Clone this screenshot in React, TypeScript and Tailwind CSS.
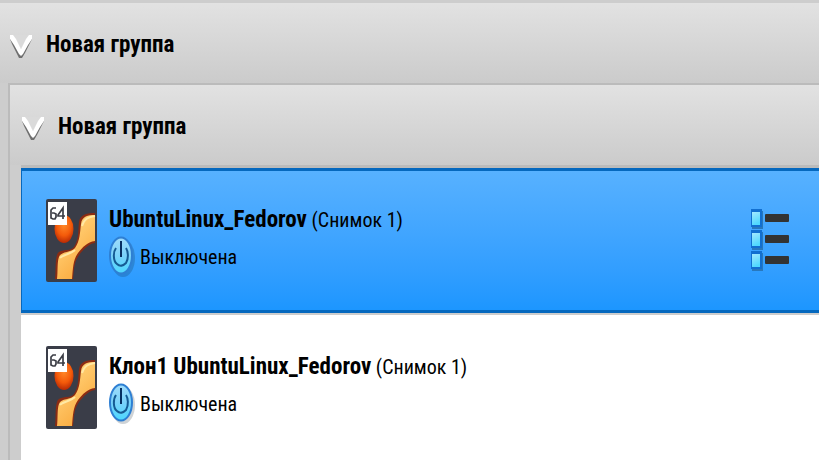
import React, { useId } from "react";

function Chevron() {
  return (
    <svg width="22" height="24" viewBox="0 0 22 24" aria-hidden="true" className="mt-2 shrink-0">
      <path d="M0 4 L2 9 L7 19 L9 23 H12 L15 18 L20 8 L22 4Z" fill="#6f6f6f" />
      <path d="M3 0 L11 15 L19 0Z" fill="#dadada" />
      <path d="M0 0 H3 L6 4 L11 14 L16 4 L19 0 H22 V4 L18 10 L13 19 L11 21 L9 19 L4 10 L0 4Z" fill="#fff" />
    </svg>
  );
}

function GroupHeader({ title, className }: { title: string; className: string }) {
  return (
    <button
      type="button"
      aria-expanded="true"
      className={`flex w-full items-center gap-[14px] bg-linear-to-b from-[#e2e2e2] to-[#cbcbcb] text-left text-[23px] leading-7 font-bold ${className}`}
    >
      <Chevron />
      <span className="pt-1">{title}</span>
    </button>
  );
}

function OsIcon() {
  const id = useId();
  return (
    <svg width="51" height="83" viewBox="0 0 51 83" role="img" aria-label="Ubuntu 64" className="shrink-0">
      <defs>
        <linearGradient id={`${id}a`} x1="0" y1="0" x2="0.6" y2="1">
          <stop offset="0" stopColor="#ffdc82" />
          <stop offset="0.5" stopColor="#ffc565" />
          <stop offset="1" stopColor="#f9a93d" />
        </linearGradient>
        <radialGradient id={`${id}b`} cx="0.5" cy="0.35" r="0.65">
          <stop offset="0" stopColor="#ff8a2a" />
          <stop offset="0.6" stopColor="#f45a0a" />
          <stop offset="1" stopColor="#b82a05" />
        </radialGradient>
      </defs>
      <rect width="51" height="83" rx="2" fill="#3a3d48" />
      <ellipse cx="18" cy="30" rx="9.500" ry="14" fill={`url(#${id}b)`} />
      <path
        d="M49 14 C42 14 34 15 33 23 C32 32 33 40 28 48 C24 53 13 49 11 56 C9 62 10 73 9 80 H27 C28 70 28 63 33 56 C38 50 42 45 49 44Z"
        fill="#8c2c12"
      />
      <path
        d="M49 16 C42 16 36 17 35 25 C34 33 34 42 29 49 C25 54 15 52 13 58 C11 63 12 73 11 80 H26 C27 69 27 61 32 54 C37 48 41 43 49 42Z"
        fill={`url(#${id}a)`}
      />
      <path d="M49 17 C42 18 38 20 36 27 M14 59 C16 56 25 55 29 51" fill="none" stroke="#ffe9a4" strokeWidth="2" />
      <rect x="2" y="3" width="19" height="23" fill="#fff" />
      <path
        d="M10 9 H7 L5 11 V19 L7 20 H9 L10 18 V15 L8 14 H6 M17 20 V9 L12 16 V17 H19"
        fill="none"
        stroke="#3c3e46"
        strokeWidth="1.700"
      />
    </svg>
  );
}

function PowerIcon() {
  const id = useId();
  return (
    <svg width="27" height="42" viewBox="0 0 27 42" aria-hidden="true" className="shrink-0">
      <defs>
        <linearGradient id={id} x1="0" y1="0" x2="0" y2="1">
          <stop offset="0" stopColor="#a0dcfa" />
          <stop offset="0.5" stopColor="#7ad2fa" />
          <stop offset="1" stopColor="#4bd8ff" />
        </linearGradient>
      </defs>
      <ellipse cx="14" cy="22" rx="12" ry="19" fill="#123" opacity="0.200" />
      <ellipse cx="12" cy="19.500" rx="11" ry="18" fill={`url(#${id})`} stroke="#2e7fd3" strokeWidth="2" />
      <path d="M7 12 C4 16 4 25 8 28 C11 31 14 30 17 27 C20 22 19 15 17 12" fill="none" stroke="#155b94" strokeWidth="2" />
      <path d="M12 5 V21" stroke="#062f61" strokeWidth="2" />
    </svg>
  );
}

function ListIcon() {
  const id = useId();
  return (
    <svg width="39" height="63" viewBox="0 0 39 63" aria-hidden="true">
      <defs>
        <linearGradient id={id} x1="0" y1="0" x2="0.300" y2="1">
          <stop offset="0" stopColor="#a4e8ff" />
          <stop offset="1" stopColor="#50d8ff" />
        </linearGradient>
      </defs>
      {[0, 21, 42].map((y) => (
        <g key={y}>
          <rect x="1" y={y + 2} width="11" height="18" fill="#2878bd" />
          <rect x="0" y={y} width="11" height="18" fill="#126fd0" />
          <rect x="1" y={y + 3} width="8" height="13" fill={`url(#${id})`} />
          <rect x="14" y={y + 5} width="24" height="8" rx="1" fill="#333" />
        </g>
      ))}
    </svg>
  );
}

function Machine({ name, snapshot, selected = false }: { name: string; snapshot: string; selected?: boolean }) {
  return (
    <li
      className={`flex items-center pr-[29px] ${
        selected
          ? "h-[145px] border-y-[3px] border-l border-[#0568be] bg-linear-to-b from-[#57b1ff] to-[#1c96ff] pl-6"
          : "h-[147px] border-t-2 border-[#cdcdcd] bg-white pl-[25px]"
      }`}
    >
      <OsIcon />
      <div className="ml-3 min-w-0 flex-1">
        <p className="text-[20px] leading-8 whitespace-nowrap">
          <strong className="text-[23px]">{name}</strong> ({snapshot})
        </p>
        <p className="flex items-center gap-1 text-[20px] leading-8">
          <PowerIcon />
          <span>Выключена</span>
        </p>
      </div>
      {selected && (
        <button type="button" aria-label="Меню машины" className="shrink-0">
          <ListIcon />
        </button>
      )}
    </li>
  );
}

export default function App() {
  return (
    <main className="min-h-screen overflow-hidden border-t-[3px] border-[#cdcdcd] bg-[#cdcdcd] font-['Roboto_Condensed','DejaVu_Sans_Condensed',sans-serif] text-black">
      <GroupHeader title="Новая группа" className="h-20 pl-[10px]" />
      <section className="ml-2 border-t-2 border-l-2 border-[#bbb]">
        <GroupHeader title="Новая группа" className="h-20 pl-3" />
        <ul className="ml-[11px] min-h-[295px] border-t-[3px] border-[#bbb] bg-white">
          <Machine name="UbuntuLinux_Fedorov" snapshot="Снимок 1" selected />
          <Machine name="Клон1 UbuntuLinux_Fedorov" snapshot="Снимок 1" />
        </ul>
      </section>
    </main>
  );
}
